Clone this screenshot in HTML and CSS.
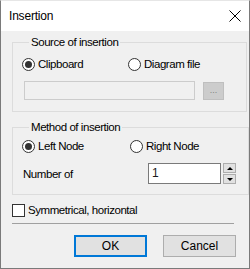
FILE: index.html
```html
<!DOCTYPE html>
<html lang="en">
<head>
	<meta charset="UTF-8">
	<meta name="viewport" content="width=device-width, initial-scale=1.0">
	<title>Insertion</title>
	<link rel="stylesheet" href="styles.css">
</head>
<body>
	<div class="window">
		<div class="titlebar">
			<span class="title">Insertion</span>
			<svg class="close" width="12" height="12" viewBox="0 0 12 12">
				<path d="M0.5 0.5 L11.5 11.5 M11.5 0.5 L0.5 11.5" stroke="#000" stroke-width="1" fill="none"/>
			</svg>
		</div>
		<div class="content">
			<fieldset class="group group-source">
				<legend>Source of insertion</legend>
				<div class="radio-row">
					<label class="radio checked"><span class="dot"></span>Clipboard</label>
					<label class="radio"><span class="dot"></span>Diagram file</label>
				</div>
				<div class="file-row">
					<div class="file-input"></div>
					<div class="browse-btn">...</div>
				</div>
			</fieldset>

			<fieldset class="group group-method">
				<legend>Method of insertion</legend>
				<div class="radio-row">
					<label class="radio checked"><span class="dot"></span>Left Node</label>
					<label class="radio"><span class="dot"></span>Right Node</label>
				</div>
				<div class="number-row">
					<span class="number-label">Number of</span>
					<div class="spin">
						<div class="spin-input">1</div>
						<div class="spin-buttons">
							<div class="spin-btn"><span class="arrow-up"></span></div>
							<div class="spin-btn"><span class="arrow-down"></span></div>
						</div>
					</div>
				</div>
			</fieldset>

			<label class="checkbox"><span class="box"></span>Symmetrical, horizontal</label>

			<div class="separator"></div>

			<div class="buttons">
				<div class="btn btn-default">OK</div>
				<div class="btn">Cancel</div>
			</div>
		</div>
	</div>
</body>
</html>
```

FILE: styles.css
```css
*,
*::before,
*::after {
	box-sizing: border-box;
	margin: 0;
	padding: 0;
}

body {
	font-family: "Liberation Sans", Arial, sans-serif;
	font-size: 11.5px;
	letter-spacing: -0.45px;
	line-height: 15px;
	color: #000;
	background-color: #fff;
}

.window {
	width: 250px;
	height: 269px;
	border: 1px solid #7a7a7a;
	border-top-color: #e6e6e6;
	background-color: #f0f0f0;
}

.titlebar {
	height: 30px;
	background-color: #fff;
	display: flex;
	align-items: center;
	justify-content: space-between;
	padding-left: 8px;
	padding-right: 8px;
}

.title {
	font-size: 12px;
	letter-spacing: -0.2px;
	margin-top: 1px;
}

.close {
	display: block;
	margin-top: -1px;
}

.content {
	padding: 4px 12px 0 11px;
}

/* group boxes */
.group {
	border: 1px solid #dcdcdc;
	width: 225px;
}

.group legend {
	margin-left: 7px;
	padding: 0 2px;
	line-height: 15px;
}

.group-source {
	padding: 6px 12px 11px 9px;
}

.group-method {
	margin-top: 8px;
	padding: 3px 12px 10px 9px;
}

.radio-row {
	display: flex;
	align-items: center;
	height: 17px;
}

.radio {
	display: flex;
	align-items: center;
	gap: 3px;
	width: 106px;
}

.group-method .radio:first-child {
	width: 108px;
}

.radio .dot {
	width: 13px;
	height: 13px;
	border: 1px solid #333;
	border-radius: 50%;
	background-color: #fff;
	display: flex;
	align-items: center;
	justify-content: center;
}

.radio.checked .dot::after {
	content: "";
	width: 7px;
	height: 7px;
	border-radius: 50%;
	background-color: #333;
}

/* file row */
.file-row {
	display: flex;
	align-items: center;
	gap: 8px;
	margin-top: 8px;
	margin-left: 2px;
}

.file-input {
	width: 171px;
	height: 19px;
	border: 1px solid #cccccc;
	background-color: #f0f0f0;
}

.browse-btn {
	width: 21px;
	height: 18px;
	background-color: #cccccc;
	border: 1px solid #bfbfbf;
	color: #838383;
	font-size: 9px;
	letter-spacing: 0;
	line-height: 14px;
	text-align: center;
}

/* number row */
.number-row {
	display: flex;
	align-items: center;
	justify-content: space-between;
	margin-top: 8px;
}

.number-label {
	margin-left: 1px;
	margin-top: 1px;
}

.spin {
	display: flex;
	gap: 2px;
}

.spin-input {
	width: 73px;
	height: 21px;
	border: 1px solid #7a7a7a;
	background-color: #fff;
	padding-left: 3px;
	line-height: 19px;
	font-size: 12px;
	color: #1a1a1a;
}

.spin-buttons {
	display: flex;
	flex-direction: column;
	gap: 1px;
}

.spin-btn {
	width: 13px;
	height: 10px;
	background-color: #e1e1e1;
	border: 1px solid #adadad;
	display: flex;
	align-items: center;
	justify-content: center;
}

.arrow-up {
	width: 0;
	height: 0;
	border-left: 3px solid transparent;
	border-right: 3px solid transparent;
	border-bottom: 3px solid #000;
}

.arrow-down {
	width: 0;
	height: 0;
	border-left: 3px solid transparent;
	border-right: 3px solid transparent;
	border-top: 3px solid #000;
}

/* checkbox */
.checkbox {
	display: flex;
	align-items: center;
	gap: 3px;
	margin-top: 9px;
	height: 13px;
}

.checkbox .box {
	width: 13px;
	height: 13px;
	border: 1px solid #333;
	background-color: #fff;
}

.separator {
	height: 1px;
	width: 222px;
	background-color: #a0a0a0;
	margin-top: 6px;
}

.buttons {
	display: flex;
	justify-content: flex-end;
	gap: 16px;
	margin-top: 11px;
	padding-right: 1px;
}

.btn {
	width: 73px;
	height: 22px;
	background-color: #e1e1e1;
	border: 1px solid #adadad;
	text-align: center;
	line-height: 20px;
	font-size: 12px;
	letter-spacing: 0;
}

.btn-default {
	border: 2px solid #0078d7;
	line-height: 18px;
}
```
